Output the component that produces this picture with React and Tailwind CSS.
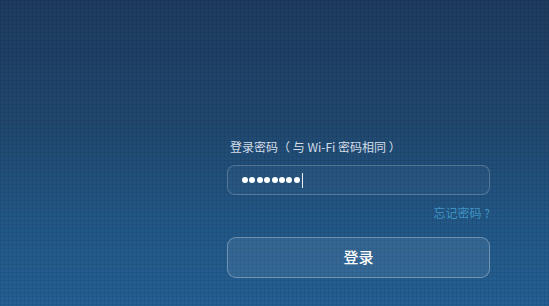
const CJK = "font-['Noto_Sans_CJK_SC','Noto_Sans',sans-serif]";

function PasswordDots({ count }) {
  return (
    <div className="flex items-center gap-[1.4px]">
      {Array.from({ length: count }).map((_, i) => (
        <span key={i} className="block w-[6px] h-[6px] rounded-full bg-white" />
      ))}
      <span className="block w-[1px] h-[15px] bg-white/90 ml-[1px]" />
    </div>
  );
}

export default function App() {
  return (
    <div
      className={`relative w-full h-[306px] overflow-hidden ${CJK} bg-[linear-gradient(to_bottom,#1e3b60_0%,#20486f_40%,#225888_75%,#245f93_100%)]`}
    >
      {/* faint grid texture */}
      <div className="absolute inset-0 pointer-events-none bg-[linear-gradient(rgba(0,0,0,0.07)_1px,transparent_1px),linear-gradient(90deg,rgba(0,0,0,0.07)_1px,transparent_1px)] bg-[size:4px_4px]" />

      <div className="relative flex flex-col w-[263px] ml-[227px] pt-[140px]">
        <label className="pl-[3px] text-[12px] leading-[14px] text-[#d3dde8]">
          登录密码（ 与 Wi-Fi 密码相同 ）
        </label>

        <div className="mt-[11px] h-[30px] flex items-center pl-[14px] rounded-[8px] border border-white/20 bg-white/[0.03]">
          <PasswordDots count={8} />
        </div>

        <div className="mt-[11px] text-right text-[12px] leading-[14px] text-[#3f94c2]">
          忘记密码 ?
        </div>

        <button className="mt-[17px] h-[41px] w-full rounded-[9px] border-[1.5px] border-white/30 bg-white/[0.08] text-[15px] font-medium text-white">
          登录
        </button>
      </div>
    </div>
  );
}
